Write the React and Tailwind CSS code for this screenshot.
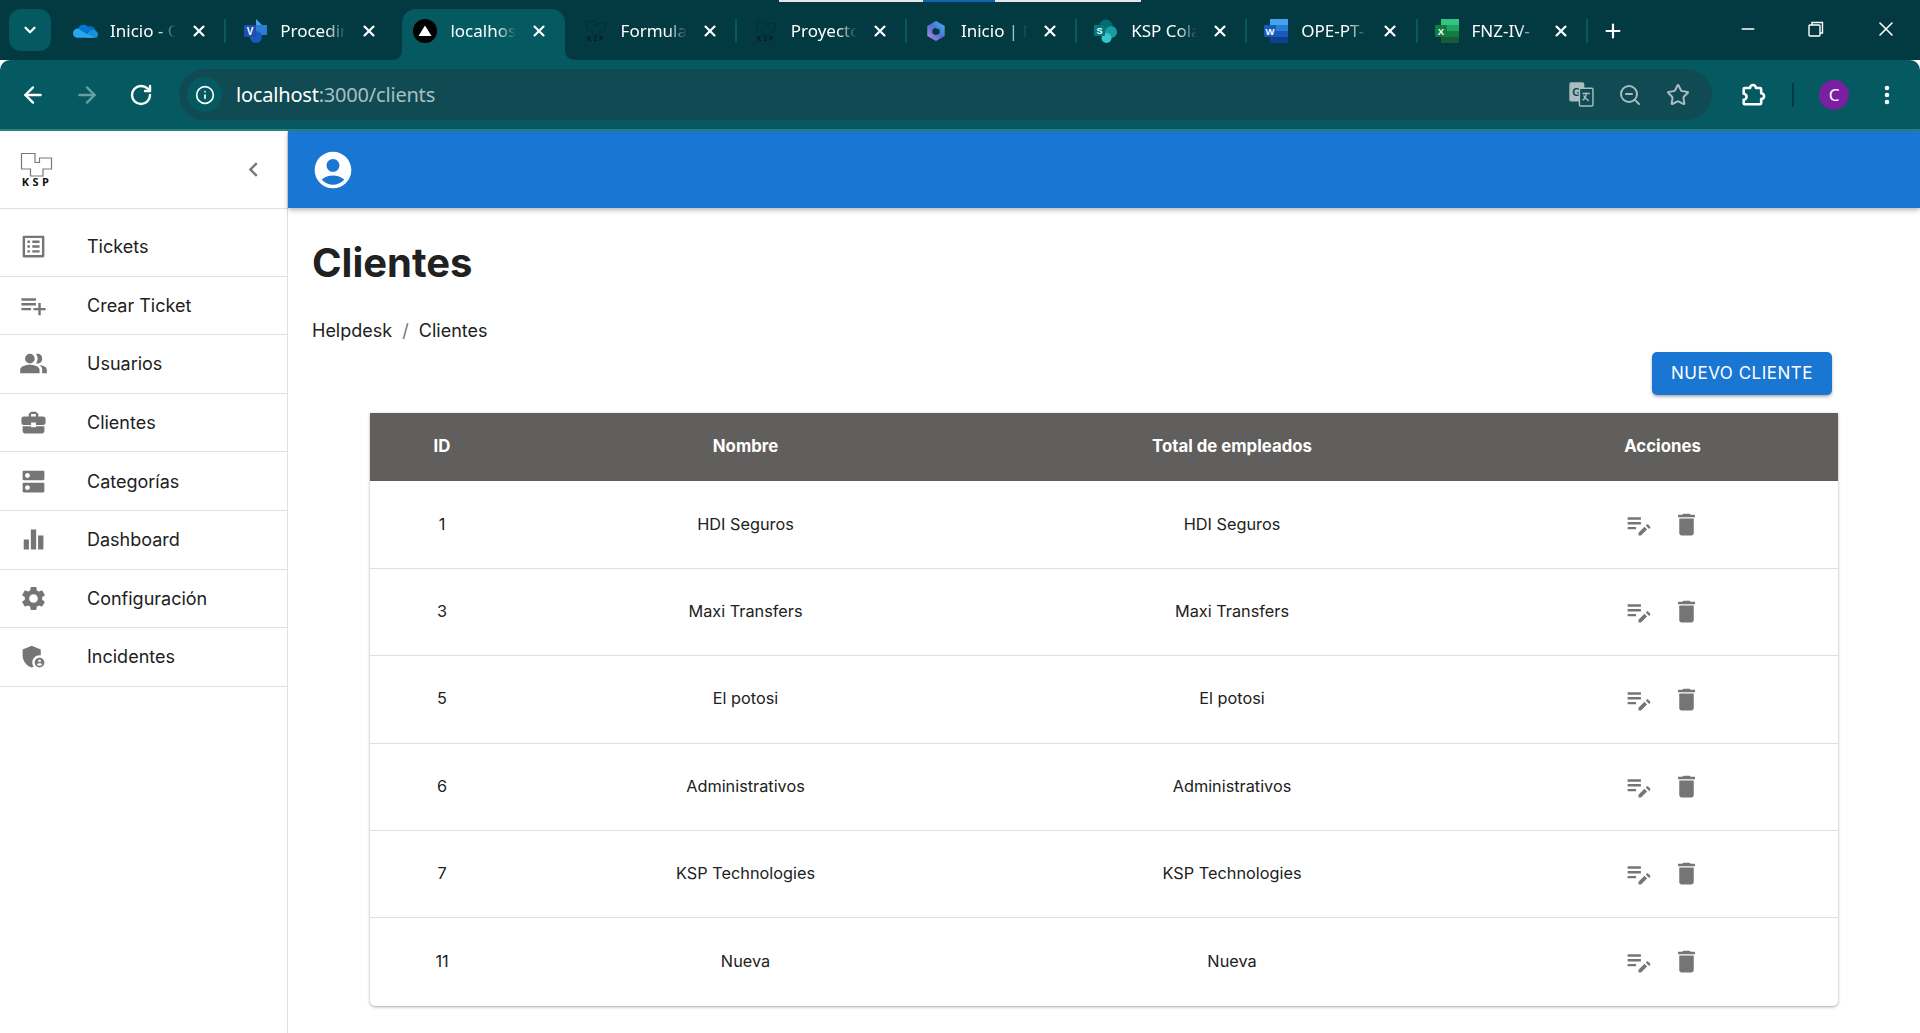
import { ArrowLeft, ArrowRight, RotateCw, Info, ZoomOut, Star, EllipsisVertical, ChevronDown, X, Plus, Minus } from "lucide-react";

const chromeFont = "font-['Noto_Sans','Open_Sans',sans-serif]";

// material icon paths
const icons = {
  listAlt: "M19 5v14H5V5h14m1.1-2H3.9c-.5 0-.9.4-.9.9v16.2c0 .4.4.9.9.9h16.2c.4 0 .9-.5.9-.9V3.9c0-.5-.5-.9-.9-.9zM11 7h6v2h-6V7zm0 4h6v2h-6v-2zm0 4h6v2h-6zM7 7h2v2H7zm0 4h2v2H7zm0 4h2v2H7z",
  playlistAdd: "M14 10H2v2h12v-2zm0-4H2v2h12V6zm4 8v-4h-2v4h-4v2h4v4h2v-4h4v-2h-4zM2 16h8v-2H2v2z",
  people: "M9 12a4 4 0 1 0 0-8 4 4 0 0 0 0 8zM9 13c-3 0-8 1.3-8 4v3h16v-3c0-2.7-5-4-8-4zM15.5 12c2 0 3.7-1.7 3.7-4s-1.7-4-3.7-4c-.5 0-1 .1-1.4.3.8 1 1.3 2.3 1.3 3.7s-.5 2.7-1.3 3.7c.4.2.9.3 1.4.3zM17 13.2c1.4 1 2.2 2.2 2.2 3.8v3H23v-3c0-2.3-3-3.5-6-3.8z",
  business: "M10 16v-1H3.01L3 19c0 1.11.89 2 2 2h14c1.11 0 2-.89 2-2v-4h-7v1h-4zm10-9h-4.01V5l-2-2h-4l-2 2v2H4c-1.1 0-2 .9-2 2v3c0 1.11.89 2 2 2h6v-2h4v2h6c1.1 0 2-.9 2-2V9c0-1.1-.9-2-2-2zm-6 0h-4V5h4v2z",
  dns: "M20 13H4c-.55 0-1 .45-1 1v6c0 .55.45 1 1 1h16c.55 0 1-.45 1-1v-6c0-.55-.45-1-1-1zM7 19c-1.1 0-2-.9-2-2s.9-2 2-2 2 .9 2 2-.9 2-2 2zM20 3H4c-.55 0-1 .45-1 1v6c0 .55.45 1 1 1h16c.55 0 1-.45 1-1V4c0-.55-.45-1-1-1zM7 9c-1.1 0-2-.9-2-2s.9-2 2-2 2 .9 2 2-.9 2-2 2z",
  barChart: "M3.9 12h4.3v8.3H3.9zM9.8 3.7h4.4v16.6H9.8zM15.8 8.7h4.4v11.6h-4.4z",
  settings: "M19.14 12.94c.04-.3.06-.61.06-.94 0-.32-.02-.64-.07-.94l2.03-1.58c.18-.14.23-.41.12-.61l-1.92-3.32c-.12-.22-.37-.29-.59-.22l-2.39.96c-.5-.38-1.03-.7-1.62-.94l-.36-2.54c-.04-.24-.24-.41-.48-.41h-3.84c-.24 0-.43.17-.47.41l-.36 2.54c-.59.24-1.13.57-1.62.94l-2.39-.96c-.22-.08-.47 0-.59.22L2.74 8.87c-.12.21-.08.47.12.61l2.03 1.58c-.05.3-.09.63-.09.94s.02.64.07.94l-2.03 1.58c-.18.14-.23.41-.12.61l1.92 3.32c.12.22.37.29.59.22l2.39-.96c.5.38 1.03.7 1.62.94l.36 2.54c.05.24.24.41.48.41h3.84c.24 0 .44-.17.47-.41l.36-2.54c.59-.24 1.13-.56 1.62-.94l2.39.96c.22.08.47 0 .59-.22l1.92-3.32c.12-.22.07-.47-.12-.61l-2.01-1.58zM12 15.6c-1.98 0-3.6-1.62-3.6-3.6s1.62-3.6 3.6-3.6 3.6 1.62 3.6 3.6-1.62 3.6-3.6 3.6z",
  admin: "M17 11c.34 0 .67.04 1 .09V6.27L10.5 3 3 6.27v4.91c0 4.54 3.2 8.79 7.5 9.82.55-.13 1.08-.32 1.6-.55-.69-.98-1.1-2.17-1.1-3.45 0-3.31 2.69-6 6-6zM17 13c-2.21 0-4 1.79-4 4s1.79 4 4 4 4-1.79 4-4-1.79-4-4-4zm0 1.38c.62 0 1.12.51 1.12 1.12s-.51 1.12-1.12 1.12-1.12-.51-1.12-1.12.5-1.12 1.12-1.12zm0 5.37c-.93 0-1.74-.46-2.24-1.17.05-.72 1.51-1.08 2.24-1.08s2.19.36 2.24 1.08c-.5.71-1.31 1.17-2.24 1.17z",
  account: "M12 2C6.48 2 2 6.48 2 12s4.48 10 10 10 10-4.48 10-10S17.52 2 12 2zm0 4c1.93 0 3.5 1.57 3.5 3.5S13.93 13 12 13s-3.5-1.57-3.5-3.5S10.07 6 12 6zm0 14c-2.03 0-4.43-.82-6.14-2.88C7.55 15.8 9.68 15 12 15s4.45.8 6.14 2.12C16.43 19.18 14.03 20 12 20z",
  del: "M6 19c0 1.1.9 2 2 2h8c1.1 0 2-.9 2-2V7H6v12zM19 4h-3.5l-1-1h-5l-1 1H5v2h14V4z",
  editNote: "M3 10h11v2H3v-2zm0-2h11V6H3v2zm0 8h7v-2H3v2zm15.01-3.13.71-.71c.39-.39 1.02-.39 1.41 0l1.41 1.41c.39.39.39 1.02 0 1.41l-.71.71-2.82-2.82zm-1.06 1.06L12 18.88V21h2.12l4.95-4.95-2.12-2.12z",
  chevronLeft: "M15.41 7.41 14 6l-6 6 6 6 1.41-1.41L10.83 12z",
};

function MuiIcon({ name, className = "w-[29px] h-[29px] text-[#757575]" }) {
  return (
    <svg viewBox="0 0 24 24" fill="currentColor" className={`shrink-0 ${className}`}>
      <path d={icons[name]} />
    </svg>
  );
}

// -------------------------
// FAVICONS
// -------------------------
function OneDriveIcon() {
  return (
    <svg viewBox="0 0 24 16" className="w-[25px] h-[17px]">
      <path d="M9 9 14.5 4c3-1 6 0 7 3l-6 5z" fill="#0364b8" />
      <path d="M5 6c1-3 5-5 9-2l4 3-9 5-5-2z" fill="#0078d4" />
      <path d="M18 7c3 0 6 2 6 5 0 2-1 3-3 3h-8l1-5z" fill="#1490df" />
      <path d="M5 6c-3 0-5 2-5 5 0 2 2 4 4 4h17L9 9z" fill="#28a8ea" />
    </svg>
  );
}

function VisioIcon() {
  return (
    <svg viewBox="0 0 24 24" className="w-[24px] h-[24px]">
      <path d="M13 0l6 6-6 6z" fill="#41a5ee" />
      <rect x="13" y="6" width="11" height="10" fill="#2b7cd3" />
      <circle cx="13" cy="18" r="6" fill="#185abd" />
      <rect x="1" y="6" width="12" height="12" rx="1" fill="#1c4fb0" />
      <text x="7" y="15.5" textAnchor="middle" fontSize="10" fontWeight="700" fill="#fff" fontFamily="Liberation Sans">V</text>
    </svg>
  );
}

function NextIcon() {
  return (
    <svg viewBox="0 0 24 24" className="w-[24px] h-[24px]">
      <circle cx="12" cy="12" r="12" fill="#000" />
      <path d="M12 6.5 18.5 17H5.5z" fill="#fff" />
    </svg>
  );
}

function KspLogo({ small }) {
  return (
    <svg viewBox="0 0 33 34" className={small ? "w-[20px] h-[24px]" : "w-[33px] h-[34px]"}>
      <path
        d="M1.5.5H15V9.5H19.5V5H31.5V16H23V23H10.5V16H1.5Z"
        fill="none"
        stroke={small ? "#0a2a2f" : "#7a7a7a"}
        strokeWidth="1.2"
      />
      <text x="17" y="33" textAnchor="middle" fontSize="11" fontWeight="700" letterSpacing="3.4" fill={small ? "#05191c" : "#111"} fontFamily="Open Sans">KSP</text>
    </svg>
  );
}

function CopilotIcon() {
  return (
    <svg viewBox="0 0 24 24" className="w-[22px] h-[26px]">
      <defs>
        <linearGradient id="cp" x1="1" y1="0" x2="0" y2="1">
          <stop offset="0" stopColor="#35c0e8" />
          <stop offset="0.5" stopColor="#4f6fd8" />
          <stop offset="1" stopColor="#c98be0" />
        </linearGradient>
      </defs>
      <path fillRule="evenodd" d="M12 1l9.5 5.5v11L12 23l-9.5-5.5v-11zM11 8.5l-3 2v4l4 2.2 4-2.2v-4z" fill="url(#cp)" />
    </svg>
  );
}

function SharePointIcon() {
  return (
    <svg viewBox="0 0 24 24" className="w-[24px] h-[24px]">
      <circle cx="12" cy="7" r="6.5" fill="#036c70" />
      <circle cx="17" cy="13" r="6" fill="#1a9ba1" />
      <circle cx="12.5" cy="19" r="5" fill="#37c6d0" />
      <rect x="0" y="6" width="11" height="11" rx="1" fill="#03787c" />
      <text x="5.5" y="15" textAnchor="middle" fontSize="9" fontWeight="700" fill="#fff" fontFamily="Liberation Sans">S</text>
    </svg>
  );
}

function WordIcon() {
  return (
    <svg viewBox="0 0 24 24" className="w-[24px] h-[24px]">
      <rect x="6" y="0" width="18" height="6" fill="#41a5ee" />
      <rect x="6" y="6" width="18" height="6" fill="#2b7cd3" />
      <rect x="6" y="12" width="18" height="6" fill="#185abd" />
      <rect x="6" y="18" width="18" height="6" fill="#103f91" />
      <rect x="0" y="6" width="12" height="12" rx="1" fill="#185abd" />
      <text x="6" y="15.5" textAnchor="middle" fontSize="9.5" fontWeight="700" fill="#fff" fontFamily="Liberation Sans">W</text>
    </svg>
  );
}

function ExcelIcon() {
  return (
    <svg viewBox="0 0 24 24" className="w-[24px] h-[24px]">
      <rect x="6" y="0" width="18" height="6" fill="#33c481" />
      <rect x="6" y="6" width="18" height="6" fill="#21a366" />
      <rect x="6" y="12" width="18" height="6" fill="#107c41" />
      <rect x="6" y="18" width="18" height="6" fill="#185c37" />
      <rect x="0" y="6" width="12" height="12" rx="1" fill="#107c41" />
      <text x="6" y="15.5" textAnchor="middle" fontSize="9.5" fontWeight="700" fill="#fff" fontFamily="Liberation Sans">X</text>
    </svg>
  );
}

const tabs = [
  { title: "Inicio - O", icon: <OneDriveIcon /> },
  { title: "Procedimi", icon: <VisioIcon /> },
  { title: "localhost", icon: <NextIcon />, active: true },
  { title: "Formularios", icon: <KspLogo small /> },
  { title: "Proyectos", icon: <KspLogo small /> },
  { title: "Inicio | M", icon: <CopilotIcon /> },
  { title: "KSP Colab", icon: <SharePointIcon /> },
  { title: "OPE-PT-", icon: <WordIcon /> },
  { title: "FNZ-IV-", icon: <ExcelIcon /> },
];

function Tab({ tab, showDivider }) {
  return (
    <div className="relative flex items-center w-[170.2px] h-[51px] shrink-0 pb-[8px]">
      {tab.active && (
        <>
          <div className="absolute top-0 bottom-0 left-[6px] right-[2px] bg-[#045a60] rounded-t-[14px]" />
          <svg viewBox="0 0 10 10" className="absolute bottom-0 left-[-4px] w-[10px] h-[10px]">
            <path d="M10 0v10H0c6 0 10-4 10-10z" fill="#045a60" />
          </svg>
          <svg viewBox="0 0 10 10" className="absolute bottom-0 right-[-8px] w-[10px] h-[10px]">
            <path d="M0 0v10h10C4 10 0 6 0 0z" fill="#045a60" />
          </svg>
        </>
      )}
      <div className="relative w-[54px] pl-[4px] shrink-0 flex justify-center">{tab.icon}</div>
      <span className="relative w-[66px] shrink-0 overflow-hidden whitespace-nowrap text-[17px] text-white [mask-image:linear-gradient(to_right,black_70%,transparent)]">
        {tab.title}
      </span>
      <X size={18} strokeWidth={2.8} className="relative text-white ml-[14px] shrink-0" />
      {showDivider && <div className="absolute right-0 top-[10px] w-[2px] h-[24px] bg-[#045a60]" />}
    </div>
  );
}

function BrowserChrome() {
  return (
    <div className={`${chromeFont} shrink-0`}>
      {/* TAB STRIP */}
      <div className="relative h-[60px] bg-[#033a42] flex items-end pl-[9px]">
        {/* top loading bars */}
        <div className="absolute top-0 left-[779px] h-[2px] w-[144px] bg-[#e6e6e6]" />
        <div className="absolute top-0 left-[923px] h-[2px] w-[72px] bg-[#0f64ad]" />
        <div className="absolute top-0 left-[995px] h-[2px] w-[146px] bg-[#e6e6e6]" />

        <div className="w-[42px] h-[42px] mb-[9px] rounded-[12px] bg-[#045a60] flex items-center justify-center shrink-0">
          <ChevronDown size={18} strokeWidth={3} className="text-white" />
        </div>
        <div className="flex ml-[5px] h-[51px]">
          {tabs.map((tab, i) => (
            <Tab key={i} tab={tab} showDivider={!tab.active && !tabs[i + 1]?.active} />
          ))}
        </div>
        <div className="mb-[18px] ml-[14px] shrink-0">
          <Plus size={22} strokeWidth={2.4} className="text-white" />
        </div>
        {/* window buttons */}
        <div className="flex items-center ml-auto mb-[19px] pr-[22px] gap-[50px]">
          <Minus size={20} strokeWidth={1.6} className="text-white" />
          <svg viewBox="0 0 16 16" className="w-[16px] h-[16px]" fill="none" stroke="#fff" strokeWidth="1.4">
            <rect x="1" y="4" width="11" height="11" rx="1" />
            <path d="M4 4V1.5h10.5V12H12" />
          </svg>
          <X size={24} strokeWidth={1.6} className="text-white" />
        </div>
      </div>

      {/* TOOLBAR */}
      <div className="h-[71px] bg-[#045a60] rounded-t-[10px] border-b-2 border-[#2b8082] flex items-center">
        <ArrowLeft size={26} strokeWidth={2.2} className="text-white ml-[20px] shrink-0" />
        <ArrowRight size={26} strokeWidth={2.2} className="text-[#6a9ea0] ml-[28px] shrink-0" />
        <RotateCw size={24} strokeWidth={2.4} className="text-white ml-[29px] shrink-0" />
        <div className="ml-[26px] w-[1533px] h-[51px] rounded-full bg-[#104a52] flex items-center pl-[8px] pr-[22px]">
          <div className="w-[35px] h-[35px] rounded-full bg-[#045a60] flex items-center justify-center">
            <Info size={20} strokeWidth={2} className="text-white" />
          </div>
          <span className="ml-[14px] text-[20px] text-white tracking-[-0.2px]">
            localhost<span className="text-[#a7c0c3]">:3000/clients</span>
          </span>
          <div className="ml-auto flex items-center gap-[24px]">
            <svg viewBox="0 0 24 24" className="w-[25px] h-[25px]" fill="none" stroke="#a9bcbf" strokeWidth="1.4">
              <rect x="1" y="1" width="13" height="17" rx="1" fill="#a9bcbf" />
              <text x="7.5" y="13" textAnchor="middle" fontSize="11" fontWeight="700" fill="#104a52" stroke="none" fontFamily="Liberation Sans">G</text>
              <rect x="10" y="6" width="13" height="17" rx="1" fill="#104a52" />
              <path d="M13 11h7M16.5 10v1.5c0 3-2 5-3.5 6M14 13c1 2 3 4 5 5" />
            </svg>
            <ZoomOut size={24} strokeWidth={2} className="text-[#a9bcbf]" />
            <Star size={24} strokeWidth={2} className="text-[#a9bcbf]" />
          </div>
        </div>
        <svg viewBox="0 0 24 24" className="w-[28px] h-[28px] ml-[27px] shrink-0" fill="none" stroke="#fff" strokeWidth="2.2" strokeLinejoin="round">
          <path d="M5 6h4.5a2.5 2.5 0 0 1 5 0H18a1 1 0 0 1 1 1v3.5a2.5 2.5 0 0 1 0 5V19a1 1 0 0 1-1 1H5a1 1 0 0 1-1-1v-3a2.5 2.5 0 0 0 0-5V7a1 1 0 0 1 1-1z" />
        </svg>
        <div className="w-[2px] h-[24px] bg-[#033a42] ml-[25px] shrink-0" />
        <div className="w-[30px] h-[30px] rounded-full bg-[#7b1fa2] text-white text-[17px] flex items-center justify-center ml-[25px] shrink-0">
          C
        </div>
        <EllipsisVertical size={24} strokeWidth={2.6} className="text-white ml-[26px] shrink-0" />
      </div>
    </div>
  );
}

const menu = [
  { label: "Tickets", icon: "listAlt" },
  { label: "Crear Ticket", icon: "playlistAdd" },
  { label: "Usuarios", icon: "people" },
  { label: "Clientes", icon: "business" },
  { label: "Categorías", icon: "dns" },
  { label: "Dashboard", icon: "barChart" },
  { label: "Configuración", icon: "settings" },
  { label: "Incidentes", icon: "admin" },
];

function Sidebar() {
  return (
    <aside className="w-[288px] shrink-0 border-r border-[#e0e0e0] bg-white">
      <div className="h-[78px] flex items-center justify-between border-b border-[#e0e0e0] pl-[20px] pr-[19px]">
        <KspLogo />
        <MuiIcon name="chevronLeft" className="w-[29px] h-[29px] text-[#757575]" />
      </div>
      <nav className="pt-[9px]">
        {menu.map((item) => (
          <div key={item.label} className="h-[58.6px] flex items-center border-b border-[#e0e0e0] pl-[19px]">
            <MuiIcon name={item.icon} />
            <span className="ml-[39px] text-[#212121] text-[18px]">{item.label}</span>
          </div>
        ))}
      </nav>
    </aside>
  );
}

const clients = [
  { id: 1, name: "HDI Seguros", rowClass: "h-[87px] border-b border-[#e0e0e0]" },
  { id: 3, name: "Maxi Transfers", rowClass: "h-[87px] border-b border-[#e0e0e0]" },
  { id: 5, name: "El potosi", rowClass: "h-[88px] border-b border-[#e0e0e0]" },
  { id: 6, name: "Administrativos", rowClass: "h-[87px] border-b border-[#e0e0e0]" },
  { id: 7, name: "KSP Technologies", rowClass: "h-[87px] border-b border-[#e0e0e0]" },
  { id: 11, name: "Nueva", rowClass: "h-[89px]" },
];

function ClientsTable() {
  return (
    <div className="ml-[58px] w-[1468px] rounded-b-[5px] shadow-[0_1px_3px_rgba(0,0,0,0.35)] overflow-hidden">
      <table className="w-full table-fixed text-center text-[16.3px] text-[#212121]">
        <colgroup>
          <col className="w-[144px]" />
          <col className="w-[463px]" />
          <col className="w-[510px]" />
          <col className="w-[351px]" />
        </colgroup>
        <thead>
          <tr className="h-[68px] bg-[#615f5d] text-white font-bold text-[16.8px]">
            <th className="pb-[1px]">ID</th>
            <th className="pb-[1px]">Nombre</th>
            <th className="pb-[1px]">Total de empleados</th>
            <th className="pb-[1px]">Acciones</th>
          </tr>
        </thead>
        <tbody>
          {clients.map((c) => (
            <tr key={c.id} className={c.rowClass}>
              <td className="pb-[1px]">{c.id}</td>
              <td className="pb-[1px]">{c.name}</td>
              <td className="pb-[1px]">{c.name}</td>
              <td>
                <div className="flex justify-center gap-[19px]">
                  <MuiIcon name="editNote" />
                  <MuiIcon name="del" />
                </div>
              </td>
            </tr>
          ))}
        </tbody>
      </table>
    </div>
  );
}

export default function App() {
  return (
    <div className="h-[1033px] w-[1920px] overflow-hidden flex flex-col bg-white font-['Inter',sans-serif]">
      <BrowserChrome />
      <div className="flex flex-1 min-h-0">
        <Sidebar />
        <main className="flex-1 min-w-0">
          {/* APP BAR */}
          <div className="h-[77px] bg-[#1976d2] flex items-center pl-[23px] shadow-[0_2px_5px_rgba(0,0,0,0.3)]">
            <MuiIcon name="account" className="w-[44px] h-[44px] text-white" />
          </div>

          <div className="pl-[24px] pr-[24px]">
            <h1 className="mt-[31px] text-[40px] leading-[48px] font-bold text-[#212121]">Clientes</h1>
            <div className="mt-[32px] text-[18px] leading-[24px] text-[#212121]">
              Helpdesk <span className="mx-[5px] text-[#757575]">/</span> Clientes
            </div>

            <div className="flex justify-end mt-[9px] pr-[64px]">
              <button className="w-[180px] h-[43px] rounded-[5px] bg-[#1976d2] text-white text-[17px] tracking-[0.5px] shadow-[0_2px_3px_rgba(0,0,0,0.3)]">
                NUEVO CLIENTE
              </button>
            </div>

            <div className="mt-[18px]">
              <ClientsTable />
            </div>
          </div>
        </main>
      </div>
    </div>
  );
}
